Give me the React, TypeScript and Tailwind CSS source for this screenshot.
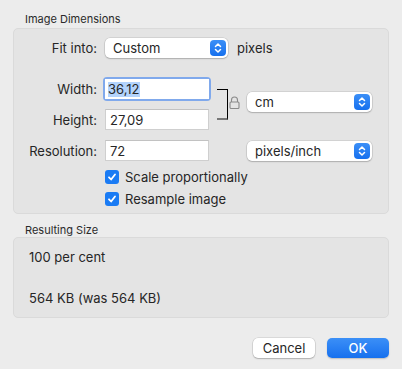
import React from "react";

function Stepper() {
  return (
    <span className="flex h-[16px] w-[16px] items-center justify-center rounded-[4px] bg-gradient-to-b from-[#3b8ff7] to-[#1570ee]">
      <svg width="8" height="12" viewBox="0 0 8 12" fill="none">
        <path d="M1.5 4.5 4 2l2.5 2.5M1.5 7.5 4 10l2.5-2.5" stroke="white" strokeWidth="1.5" strokeLinecap="round" strokeLinejoin="round" />
      </svg>
    </span>
  );
}

function Popup({ label, width }: { label: string; width: string }) {
  return (
    <div
      className={`flex h-[20px] ${width} items-center justify-between rounded-[5px] bg-white pl-[8px] pr-[2px] shadow-[0_0_0_0.5px_rgba(0,0,0,0.15),0_1px_1.5px_rgba(0,0,0,0.18)]`}
    >
      <span>{label}</span>
      <Stepper />
    </div>
  );
}

function Field({ value, focused }: { value: string; focused?: boolean }) {
  if (focused) {
    return (
      <div className="rounded-[4px] bg-[#80a9ec] p-[2px]">
        <div className="flex h-[20px] w-[104px] items-center bg-white px-[3px]">
          <span className="bg-[#b3d3fc] leading-[15px]">{value}</span>
        </div>
      </div>
    );
  }
  return (
    <div className="flex h-[21px] w-[104px] items-center border border-[#cfcfcf] border-t-[#c2c2c2] bg-white px-[4px]">
      {value}
    </div>
  );
}

function Check({ label }: { label: string }) {
  return (
    <div className="flex h-[14px] items-center gap-[6px]">
      <span className="flex h-[14px] w-[14px] items-center justify-center rounded-[3px] bg-[#1a7bf4]">
        <svg width="10" height="10" viewBox="0 0 10 10" fill="none">
          <path d="M2 5.3 4.1 7.5 8 2.5" stroke="white" strokeWidth="1.8" strokeLinecap="round" strokeLinejoin="round" />
        </svg>
      </span>
      <span>{label}</span>
    </div>
  );
}

export default function App() {
  return (
    <div className="h-[369px] w-[402px] bg-[#ececec] px-[13px] font-['Inter',sans-serif] text-[13px] leading-[16px] text-[#262626]">
      <p className="pl-[12px] pt-[12px] text-[11px] leading-[14px] text-[#2a2a2a]">Image Dimensions</p>

      <section className="mt-[2px] h-[186px] rounded-[5px] border border-[#dadada] bg-[#e4e4e4]">
        <div className="mt-[9px] flex items-center">
          <span className="w-[83px] text-right">Fit into:</span>
          <div className="ml-[8px]">
            <Popup label="Custom" width="w-[123px]" />
          </div>
          <span className="ml-[9px]">pixels</span>
        </div>

        <div className="mt-[19px] flex items-start">
          <div className="flex flex-col gap-[8px]">
            <div className="flex items-center">
              <span className="w-[83px] text-right">Width:</span>
              <div className="ml-[6px]">
                <Field value="36,12" focused />
              </div>
            </div>
            <div className="flex items-center">
              <span className="w-[83px] text-right">Height:</span>
              <div className="ml-[8px]">
                <Field value="27,09" />
              </div>
            </div>
          </div>
          <div className="ml-[6px] mt-[12px] h-[31px] w-[11px] border-y border-r border-b-2 border-t-black border-r-black border-b-[#777]" />
          <svg className="ml-[1px] mt-[19px]" width="11" height="13" viewBox="0 0 11 13" fill="none">
            <path d="M2.5 6V4a3 3 0 0 1 6 0v2" stroke="#8a8a8a" strokeWidth="1.1" />
            <rect x="1" y="6" width="9" height="6.5" rx="1" stroke="#8a8a8a" strokeWidth="1.1" />
          </svg>
          <div className="ml-[7px] mt-[15px]">
            <Popup label="cm" width="w-[125px]" />
          </div>
        </div>

        <div className="mt-[10px] flex items-center">
          <span className="w-[83px] text-right">Resolution:</span>
          <div className="ml-[8px]">
            <Field value="72" />
          </div>
          <div className="ml-[38px]">
            <Popup label="pixels/inch" width="w-[125px]" />
          </div>
        </div>

        <div className="ml-[91px] mt-[9px] flex flex-col gap-[8px]">
          <Check label="Scale proportionally" />
          <Check label="Resample image" />
        </div>
      </section>

      <p className="pl-[12px] pt-[9px] text-[11px] leading-[14px] text-[#2a2a2a]">Resulting Size</p>

      <section className="h-[81px] rounded-[5px] border border-[#dadada] bg-[#e4e4e4] px-[15px] pt-[11px]">
        <p>100 per cent</p>
        <p className="mt-[25px]">564 KB (was 564 KB)</p>
      </section>

      <div className="mt-[20px] flex justify-end gap-[12px]">
        <button className="h-[20px] w-[62px] rounded-[5px] bg-white shadow-[0_0_0_0.5px_rgba(0,0,0,0.15),0_1px_1.5px_rgba(0,0,0,0.2)]">
          Cancel
        </button>
        <button className="h-[20px] w-[62px] rounded-[5px] bg-gradient-to-b from-[#3b8ff7] to-[#1570ee] font-medium text-white shadow-[0_1px_1.5px_rgba(0,0,0,0.2)]">
          OK
        </button>
      </div>
    </div>
  );
}
